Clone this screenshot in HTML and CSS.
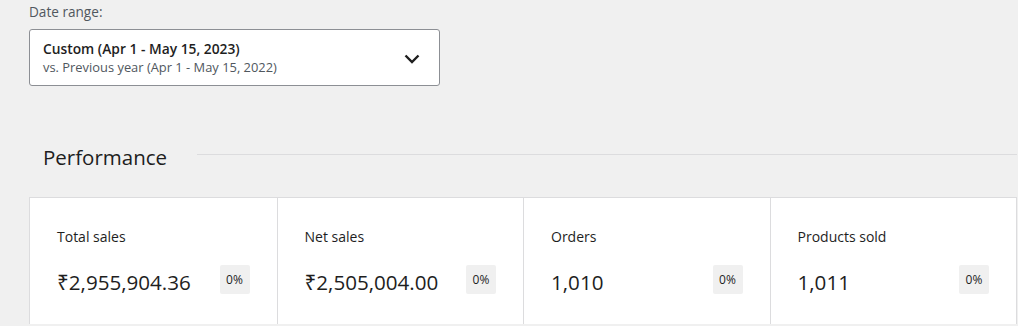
FILE: index.html
```html
<!DOCTYPE html>
<html lang="en">
<head>
    <meta charset="UTF-8">
    <meta name="viewport" content="width=device-width, initial-scale=1.0">
    <title>Analytics Overview</title>
    <link rel="stylesheet" href="styles.css">
</head>
<body>
    <div class="page">
        <div class="date-range">
            <label class="date-label">Date range:</label>
            <button class="date-select" type="button">
                <span class="date-text">
                    <span class="date-main">Custom (Apr 1 - May 15, 2023)</span>
                    <span class="date-compare">vs. Previous year (Apr 1 - May 15, 2022)</span>
                </span>
                <svg class="chevron" width="16" height="10" viewBox="0 0 16 10">
                    <polyline points="1.5,1.5 8,8 14.5,1.5" fill="none" stroke="#1e1e1e" stroke-width="2.4"/>
                </svg>
            </button>
        </div>

        <div class="section-header">
            <h2>Performance</h2>
            <span class="rule"></span>
        </div>

        <div class="cards">
            <div class="card">
                <div class="card-label">Total sales</div>
                <div class="card-row">
                    <span class="card-value">₹2,955,904.36</span>
                    <span class="delta">0%</span>
                </div>
            </div>
            <div class="card">
                <div class="card-label">Net sales</div>
                <div class="card-row">
                    <span class="card-value">₹2,505,004.00</span>
                    <span class="delta">0%</span>
                </div>
            </div>
            <div class="card">
                <div class="card-label">Orders</div>
                <div class="card-row">
                    <span class="card-value">1,010</span>
                    <span class="delta">0%</span>
                </div>
            </div>
            <div class="card">
                <div class="card-label">Products sold</div>
                <div class="card-row">
                    <span class="card-value">1,011</span>
                    <span class="delta">0%</span>
                </div>
            </div>
        </div>
    </div>
</body>
</html>
```

FILE: styles.css
```css
body {
    margin: 0;
    background: #f0f0f0;
    font-family: "Open Sans", "Noto Sans", sans-serif;
    color: #1e1e1e;
}

.page {
    padding: 3px 1px 0 29px;
}

.date-range {
    display: flex;
    flex-direction: column;
}

.date-label {
    font-size: 13.6px;
    line-height: 18px;
    color: #50575e;
    margin-bottom: 8px;
}

.date-select {
    display: flex;
    align-items: center;
    justify-content: space-between;
    width: 411px;
    height: 57px;
    padding: 1px 19px 0 13px;
    background: #fff;
    border: 1px solid #8c8f94;
    border-radius: 3px;
    font-family: inherit;
    text-align: left;
    box-sizing: border-box;
}

.date-text {
    display: flex;
    flex-direction: column;
}

.date-main {
    font-size: 13.8px;
    font-weight: 600;
    line-height: 19px;
    color: #1e1e1e;
}

.date-compare {
    font-size: 12.9px;
    line-height: 19px;
    color: #50575e;
}

.chevron {
    margin-top: 2px;
}

.section-header {
    display: flex;
    align-items: center;
    margin-top: 57px;
    padding-left: 14px;
}

.section-header h2 {
    margin: 0;
    font-size: 20.5px;
    font-weight: 400;
    line-height: 28px;
    color: #1e1e1e;
}

.rule {
    flex: 1;
    height: 1px;
    background: #dcdcde;
    margin: -5px 0 0 30px;
}

.cards {
    display: grid;
    grid-template-columns: repeat(4, 1fr);
    margin-top: 26px;
    border: 1px solid #dcdcde;
    border-bottom: none;
    background: #fff;
}

.card {
    height: 126px;
    padding: 29px 27px 0 27px;
    border-left: 1px solid #dcdcde;
    box-sizing: border-box;
}

.card:first-child {
    border-left: none;
}

.card-label {
    font-size: 14px;
    line-height: 20px;
    color: #1e1e1e;
}

.card-row {
    display: flex;
    align-items: flex-start;
    justify-content: space-between;
    margin-top: 18px;
}

.card-value {
    font-size: 20.6px;
    line-height: 28px;
    margin-top: 3px;
    color: #1e1e1e;
}

.delta {
    display: flex;
    align-items: center;
    justify-content: center;
    width: 30px;
    height: 29px;
    background: #f0f0f0;
    border-radius: 2px;
    font-size: 12px;
    color: #1e1e1e;
}
```
